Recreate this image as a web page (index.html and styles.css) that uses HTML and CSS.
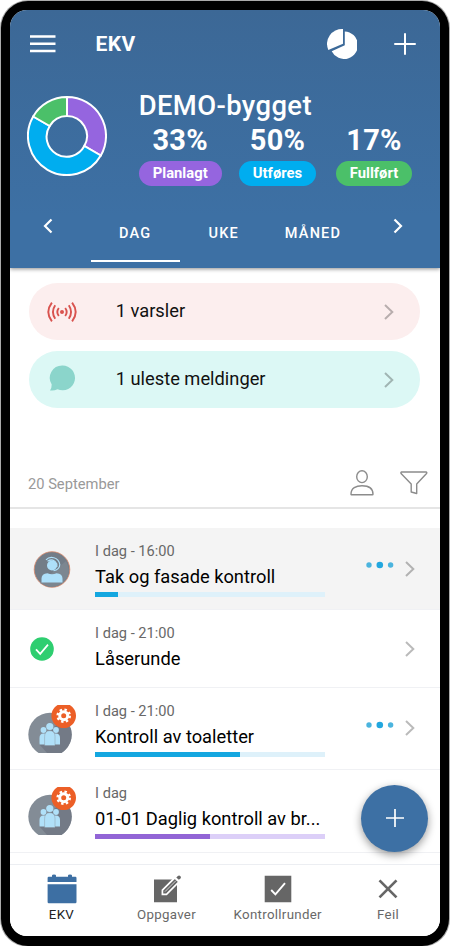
FILE: index.html
```html
<!DOCTYPE html>
<html lang="no">
<head>
<meta charset="utf-8">
<title>EKV</title>
<link rel="stylesheet" href="styles.css">
</head>
<body>
<svg width="0" height="0" class="defs">
  <symbol id="chev" viewBox="0 0 12 18"><path d="M2 2L9.3 9L2 16" fill="none" stroke="currentColor" stroke-width="2"/></symbol>
  <symbol id="dots" viewBox="0 0 28 8"><circle cx="3" cy="4" r="2.7" fill="#4bb4de"/><circle cx="13.8" cy="4" r="3.3" fill="#22a7df"/><circle cx="24.6" cy="4" r="2.7" fill="#4bb4de"/></symbol>
  <symbol id="group" viewBox="0 0 50 50">
    <clipPath id="cut"><rect y="1" width="48" height="48"/></clipPath>
    <clipPath id="disc"><circle cx="22" cy="30.5" r="21.7"/></clipPath>
    <g clip-path="url(#cut)">
      <circle cx="22" cy="30.5" r="21.7" fill="#838c96"/>
      <path d="M11 40L33 16L50 30V50H20Z" fill="#737a86" clip-path="url(#disc)"/>
      <g fill="#b0e0f8">
        <circle cx="15.5" cy="26" r="2.9"/><circle cx="28" cy="26" r="2.9"/>
        <path d="M11.5 40.5V34Q11.5 29.5 15.5 29.5H17V40.5ZM32 40.5V34Q32 29.5 28 29.5H26V40.5Z"/>
        <circle cx="21.8" cy="22.5" r="3.6"/>
        <path d="M16.6 32.5Q16.6 26.7 21.8 26.7T27 32.5V41.5H16.6Z" stroke="#838c96" stroke-width=".4"/>
      </g>
      <circle cx="35.7" cy="11.7" r="12.3" fill="#ec5f27"/>
    </g>
    <g stroke="#fff" fill="none"><circle cx="35.7" cy="11.7" r="4" stroke-width="3"/><circle cx="35.7" cy="11.7" r="6.1" stroke-width="2.4" stroke-dasharray="2.4 2.391"/></g>
  </symbol>
</svg>
<div class="phone">
<main class="screen">
  <header class="header">
    <div class="appbar">
      <svg class="menu" viewBox="0 0 26 18"><path d="M0 1.5H25.5M0 8.8H25.5M0 16.1H25.5" stroke="#fff" stroke-width="2.5"/></svg>
      <h1>EKV</h1>
      <svg class="pie" viewBox="0 0 30 30" fill="#fff"><path d="M16 .1V14.7L1.3 20.9A15 14.8 0 0 1 16 .1Z"/><path d="M17.8 2.4A13.8 13.8 0 1 1 4.7 22.2L17.8 16.2Z"/></svg>
      <svg class="plus" viewBox="0 0 22 22"><path d="M11 1V21M1 11H21" stroke="#fff" stroke-width="2" stroke-linecap="round"/></svg>
    </div>
    <div class="summary">
      <svg class="donut" viewBox="-40 -40 80 80" stroke="#fff" stroke-width="2">
        <path d="M0-39A39 39 0 0 1 33.8 19.5L17.3 10A20 20 0 0 0 0-20Z" fill="#9565df"/>
        <path d="M33.8 19.5A39 39 0 1 1-33.8-19.5L-17.3-10A20 20 0 1 0 17.3 10Z" fill="#00adef"/>
        <path d="M-33.8-19.5A39 39 0 0 1 0-39V-20A20 20 0 0 0-17.3-10Z" fill="#4bc069"/>
      </svg>
      <div class="building">
        <h2>DEMO-bygget</h2>
        <div class="stats">
          <div class="stat planned"><b>33%</b><span>Planlagt</span></div>
          <div class="stat doing"><b>50%</b><span>Utføres</span></div>
          <div class="stat done"><b>17%</b><span>Fullført</span></div>
        </div>
      </div>
    </div>
    <nav class="tabs">
      <svg class="prev" viewBox="0 0 10 16"><path d="M8.5 1.5L2 8L8.5 14.5" fill="none" stroke="#fff" stroke-width="2.2"/></svg>
      <span class="tab active">DAG</span><span class="tab">UKE</span><span class="tab month">MÅNED</span>
      <svg class="next" viewBox="0 0 10 16"><path d="M1.5 1.5L8 8L1.5 14.5" fill="none" stroke="#fff" stroke-width="2.2"/></svg>
    </nav>
  </header>
  <section class="alerts">
    <div class="alert warn">
      <svg class="alert-icon" viewBox="0 0 30 26"><circle cx="15" cy="13" r="2" fill="#d9534f"/><path d="M11.8 9Q8.8 13 11.8 17M8.2 6.3Q3.7 13 8.2 19.7M4.9 3.6Q-2.3 13 4.9 22.4M18.2 9Q21.2 13 18.2 17M21.8 6.3Q26.3 13 21.8 19.7M25.1 3.6Q32.3 13 25.1 22.4" fill="none" stroke="#d9534f" stroke-width="1.9"/></svg>
      <span>1 varsler</span><svg class="chev"><use href="#chev"/></svg>
    </div>
    <div class="alert msg">
      <svg class="alert-icon" viewBox="0 0 30 26"><path d="M15.5-1.5A12.4 12.4 0 1 1 10.5 22.2Q7 24 3 23.4Q4.8 21 4.7 17.5A12.4 12.4 0 0 1 15.5-1.5Z" fill="#8bd5cb"/></svg>
      <span>1 uleste meldinger</span><svg class="chev"><use href="#chev"/></svg>
    </div>
  </section>
  <div class="datebar">
    <span>20 September</span>
    <svg class="person" viewBox="0 0 24 26" fill="none" stroke="#8c8c8c" stroke-width="1.4"><ellipse cx="12" cy="6.7" rx="5.3" ry="5.9"/><path d="M1 24.2C1 18 6 15.7 12 15.7S23 18 23 24.2Q23 24.8 22.3 24.8H1.7Q1 24.8 1 24.2Z"/></svg>
    <svg class="filter" viewBox="0 0 28 24" fill="none" stroke="#8c8c8c" stroke-width="1.4" stroke-linejoin="round"><path d="M1.3 1H26.4Q27.3 1.5 26.3 2.8L16.7 13V22.5L11.2 21V13L1.3 2.8Q.5 1.5 1.3 1Z"/></svg>
  </div>
  <section class="list">
    <article class="item selected">
      <div class="avatar"><svg class="headset" viewBox="0 0 48 48"><circle cx="24" cy="24.5" r="17.8" fill="#737d88" stroke="#d9896b" stroke-width=".8"/><path d="M12 38L38 16Q43 25 39 33Q32 43 20 41.8Z" fill="#7c8690"/><circle cx="24" cy="20.5" r="5" fill="#aee0fa"/><path d="M13.5 37.5V33.5Q13.5 28.6 19.5 28.2Q24 30.2 28.5 28.2Q34.5 28.6 34.5 33.5V37.5Z" fill="#aee0fa"/><path d="M18 14.8C22 10.5 30.5 12 31.8 19.5Q31.5 24.8 25.5 25.6" fill="none" stroke="#aee0fa" stroke-width="1.2"/><path d="M19.5 16.2Q25.5 12.8 28.8 19V22" fill="none" stroke="#aee0fa" stroke-width="1.3"/></svg></div>
      <div class="body"><small>I dag - 16:00</small><h3>Tak og fasade kontroll</h3><div class="bar"><i style="width:10%"></i></div></div>
      <svg class="dots"><use href="#dots"/></svg><svg class="chev"><use href="#chev"/></svg>
    </article>
    <article class="item short">
      <div class="avatar"><svg class="check" viewBox="0 0 24 24"><circle cx="12" cy="12" r="11.8" fill="#2ece70"/><path d="M6 12.4L10.2 16.9L18 7.6" fill="none" stroke="#fff" stroke-width="1.7"/></svg></div>
      <div class="body"><small>I dag - 21:00</small><h3>Låserunde</h3></div>
      <svg class="chev"><use href="#chev"/></svg>
    </article>
    <article class="item">
      <div class="avatar"><svg class="group"><use href="#group"/></svg></div>
      <div class="body"><small>I dag - 21:00</small><h3>Kontroll av toaletter</h3><div class="bar"><i style="width:63%"></i></div></div>
      <svg class="dots"><use href="#dots"/></svg><svg class="chev"><use href="#chev"/></svg>
    </article>
    <article class="item">
      <div class="avatar"><svg class="group"><use href="#group"/></svg></div>
      <div class="body"><small>I dag</small><h3>01-01 Daglig kontroll av br...</h3><div class="bar violet"><i style="width:50%"></i></div></div>
    </article>
  </section>
  <button class="fab" aria-label="+"><svg viewBox="0 0 20 20"><path d="M10 1V19M1 10H19" stroke="#fff" stroke-width="1.7"/></svg></button>
  <nav class="bottom">
    <a class="on"><svg viewBox="0 0 30 30"><path d="M.6 4Q.6 2.8 1.8 2.8H5V1.4Q5 .6 7 .6T9 1.4V2.8H21V1.4Q21 .6 23 .6T25 1.4V2.8H28.4Q29.5 2.8 29.5 4V8H.6ZM.6 10.2H29.5V28Q29.5 29.2 28.3 29.2H1.8Q.6 29.2 .6 28Z" fill="#3d6fa3"/></svg><span>EKV</span></a>
    <a><svg viewBox="0 0 30 30"><path d="M2 5.6H25V28.3H2Z" fill="#666"/><path d="M10.4 20.3V16.2L22.8 3.8L27 7.8L14.5 20.3Z" fill="#666" stroke="#fff" stroke-width="1.7"/><path d="M13 17.6L24 6.6" stroke="#fff" stroke-width=".7"/><path d="M25.6 2.2Q27 .8 28.3 2T28.5 4.5L26.8 5.8L24.3 3.5Z" fill="#666"/></svg><span>Oppgaver</span></a>
    <a><svg viewBox="0 0 30 30"><path d="M1.7 1.7H28.3V28.3H1.7Z" fill="#666"/><path d="M8.2 16L12.4 20.4L22 9.2" fill="none" stroke="#fff" stroke-width="1.9"/></svg><span>Kontrollrunder</span></a>
    <a><svg viewBox="0 0 30 30"><path d="M6.5 6.4L23.5 23.4M23.5 6.4L6.5 23.4" stroke="#666" stroke-width="2.7"/></svg><span>Feil</span></a>
  </nav>
</main>
</div>
</body>
</html>
```
FILE: styles.css
```css
* { box-sizing: border-box; }
body { margin: 0; background: #fff; font-family: Roboto, "Liberation Sans", sans-serif; color: #111; }
h1, h2, h3 { margin: 0; }
svg { display: block; flex: none; }
.defs { position: absolute; }
.phone { width: 448px; height: 945px; margin: 1px; padding: 9px 9.5px 10px 9px; background: #000; border-radius: 27px; box-shadow: 0 0 0 1px #aaa; overflow: hidden; }
.screen { position: relative; height: 100%; border-radius: 17px; overflow: hidden; background: #fff; display: flex; flex-direction: column; }

.header { flex: none; height: 257.5px; background: linear-gradient(#3c6896, #3d70a4 80%); box-shadow: 0 1px 4px rgba(0,0,0,.45); color: #fff; }
.appbar { height: 68px; display: flex; align-items: center; padding: 0 24px 0 20px; }
.menu { width: 26px; height: 18px; }
.appbar h1 { flex: 1; margin-left: 39.5px; font-size: 21px; line-height: 24px; font-weight: 700; letter-spacing: .4px; }
.pie { width: 30px; height: 30px; }
.plus { width: 22px; height: 22px; margin-left: 36.5px; }
.summary { height: 120px; display: flex; padding-left: 17.4px; }
.donut { width: 80px; height: 80px; margin-top: 17.7px; }
.building { margin-left: 31.3px; }
.building h2 { margin-top: 12px; font-size: 27.4px; line-height: 33px; font-weight: 500; letter-spacing: .4px; }
.stats { display: flex; }
.stat { text-align: center; }
.stat b { display: block; font-size: 29px; line-height: 34px; height: 38px; font-weight: 700; letter-spacing: .2px; }
.stat span { display: block; height: 25px; line-height: 25px; border-radius: 13px; font-size: 14.8px; font-weight: 700; margin-top: -.5px; }
.planned { width: 83px; }
.doing { width: 77px; margin-left: 17.3px; }
.done { width: 76px; margin-left: 20px; }
.planned span { background: #9565df; }
.doing span { background: #00adef; }
.done span { background: #4bc069; }
.tabs { height: 64px; display: flex; align-items: stretch; padding-left: 33px; }
.prev, .next { width: 10px; height: 16px; margin-top: 20px; }
.tab { width: 88.5px; padding-top: 25px; text-align: center; font-size: 14.5px; line-height: 22px; font-weight: 500; letter-spacing: 1.2px; }
.prev + .tab { margin-left: 38px; }
.active { border-bottom: 2.5px solid #fff; }
.month { width: 90px; }
.next { margin-left: 35px; }

.alerts { flex: none; display: grid; gap: 11px; padding: 15.5px 19.5px 0 19.2px; }
.alert { height: 57px; border-radius: 29px; display: flex; align-items: center; padding-left: 18px; font-size: 18.3px; }
.alert span { flex: 1; margin-left: 38.5px; line-height: 22px; margin-top: -1px; }
.alert .chev { margin-right: 25px; }
.alert-icon { width: 30px; height: 26px; overflow: visible; }
.warn { background: #fceeee; }
.msg { background: #dcf8f5; }
.chev { width: 12px; height: 18px; color: rgba(0,0,0,.27); }

.datebar { flex: none; height: 51px; margin-top: 50px; border-bottom: 2px solid #e5e5e5; display: flex; align-items: center; padding: 3px 11.5px 0 18px; font-size: 14.7px; color: #999; }
.datebar span { flex: 1; }
.person { width: 24px; height: 26px; margin-top: -3px; }
.filter { width: 28px; height: 24px; margin-left: 26.5px; margin-top: -3px; }

.list { flex: none; margin-top: 19px; }
.item { height: 82.5px; border-bottom: 1px solid #f0f1f4; display: flex; padding-left: 17.6px; }
.item.short { height: 77.5px; }
.selected { background: #f4f4f4; height: 82px; }
.avatar { width: 67.5px; flex: none; }
.headset { width: 48px; height: 48px; margin-top: 17px; }
.check { width: 24px; height: 24px; margin: 26.5px 0 0 2.5px; }
.group { width: 50px; height: 50px; margin-top: 16px; }
.body { width: 230px; }
.body small { display: block; margin-top: 13px; font-size: 14.6px; line-height: 20px; color: #686868; }
.body h3 { font-size: 18.3px; font-weight: 400; line-height: 24px; margin-top: 4px; white-space: nowrap; color: #000; }
.bar { height: 5px; margin-top: 3px; background: #def1fa; }
.bar i { display: block; height: 100%; background: #14a7e0; }
.violet { background: #dccff8; }
.violet i { background: #9265d6; }
.dots { width: 28px; height: 8px; margin: 33px 0 0 41.3px; }
.item .chev { margin: 31.5px 0 0 9.2px; }
.item.short .chev { margin: 29.5px 0 0 78.5px; }

.fab { position: absolute; right: 11.3px; bottom: 84.5px; width: 67px; height: 67px; padding: 0; border: 0; border-radius: 50%; background: #3d70a4; box-shadow: 0 3px 8px rgba(0,0,0,.4); display: grid; place-items: center; }
.fab svg { width: 20px; height: 20px; }
.bottom { margin-top: auto; height: 72px; border-top: 1px solid #eceef2; display: grid; grid-template-columns: 103px 107px 115.5px 105px; background: #fff; }
.bottom a { display: flex; flex-direction: column; align-items: center; padding-top: 8.5px; font-size: 13.3px; letter-spacing: .3px; color: #686868; }
.bottom svg { width: 30px; height: 30px; }
.bottom span { line-height: 18px; margin-top: 2.5px; white-space: nowrap; }
.bottom .on { color: #222; }
```
